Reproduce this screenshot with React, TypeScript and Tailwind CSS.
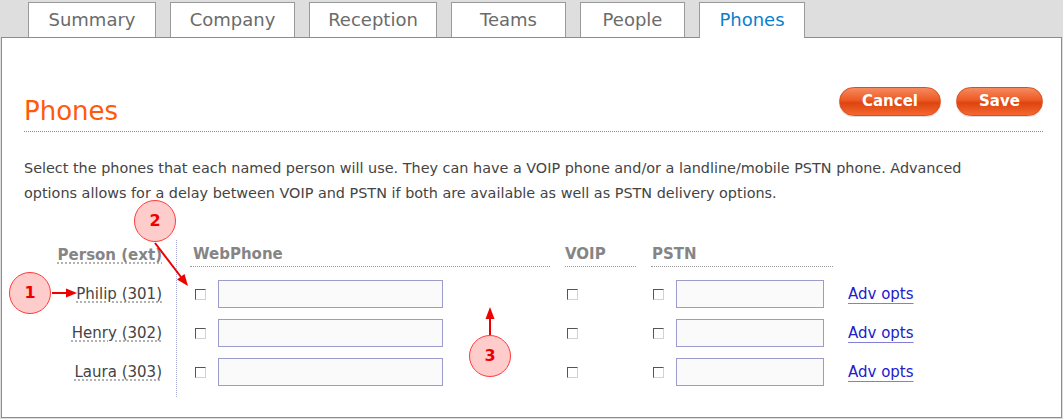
import React from "react";

const tabs = [
  { label: "Summary", w: "w-[128px]" },
  { label: "Company", w: "w-[125px]" },
  { label: "Reception", w: "w-[128px]" },
  { label: "Teams", w: "w-[115px]" },
  { label: "People", w: "w-[105px]" },
  { label: "Phones", w: "w-[106px]", active: true },
];

const people = ["Philip (301)", "Henry (302)", "Laura (303)"];

function Box() {
  return (
    <span className="inline-block h-[11px] w-[11px] shrink-0 border border-t-[#555] border-l-[#555] border-b-[#d6d3ce] border-r-[#d6d3ce] bg-white" />
  );
}

function Field({ w }: { w: string }) {
  return <div className={`h-[28px] ${w} border border-[#9b9bcc] bg-[#fafafa]`} />;
}

function OrangeButton({ label, w }: { label: string; w: string }) {
  return (
    <button
      className={`h-[29px] ${w} rounded-full border border-[#d9501e] bg-[linear-gradient(to_bottom,#f68a60,#ec5a24_45%,#dd4410_55%,#f5682f)] text-[15px] font-bold text-white shadow-[0_1px_1px_rgba(0,0,0,0.15)]`}
    >
      {label}
    </button>
  );
}

function Marker({ n, className }: { n: number; className: string }) {
  return (
    <div
      className={`absolute flex h-[42px] w-[42px] items-center justify-center rounded-full border border-[#ff3b3b] bg-[#ffcccc] text-[16px] font-bold text-[#ee0000] ${className}`}
    >
      {n}
    </div>
  );
}

export default function App() {
  return (
    <div
      className="relative h-[419px] w-[1063px] overflow-hidden bg-[#dedede] text-[#444]"
      style={{ fontFamily: '"DejaVu Sans", Verdana, sans-serif' }}
    >
      {/* tabs */}
      <div className="flex h-[37px] items-start gap-[14px] pl-[28px] pt-[2px]">
        {tabs.map((t) => (
          <div
            key={t.label}
            className={`relative flex ${t.w} items-center justify-center border border-b-0 border-[#999] bg-white pb-[1px] text-[18px] ${
              t.active ? "z-10 h-[36px] pb-[2px] text-[#0a7fcf]" : "h-[35px] text-[#6b6b6b]"
            }`}
          >
            {t.label}
          </div>
        ))}
      </div>

      {/* panel */}
      <div className="mx-[1px] border border-[#8c8c8c] bg-white pb-[20px]">
        <div className="ml-[22px] mr-[18px] mt-[49px] flex items-end justify-between border-b border-dotted border-[#ff6a1a] pb-[5px]">
          <h1 className="text-[26px] leading-[30px] text-[#ff5a0a]">Phones</h1>
          <div className="mb-[10px] flex gap-[15px]">
            <OrangeButton label="Cancel" w="w-[102px]" />
            <OrangeButton label="Save" w="w-[87px]" />
          </div>
        </div>

        <p className="ml-[22px] mr-[60px] mt-[24px] text-[14.4px] leading-[25px] text-[#444]">
          Select the phones that each named person will use. They can have a VOIP phone and/or a
          landline/mobile PSTN phone. Advanced options allows for a delay between VOIP and PSTN if
          both are available as well as PSTN delivery options.
        </p>

        {/* table */}
        <div className="ml-[22px] mt-[34px] flex items-start">
          <div className="w-[153px] border-r border-dotted border-[#a9a9d6] pb-[11px] pr-[14px] text-right">
            <div className="flex h-[27px] items-end justify-end pb-[3px]">
              <span className="text-[15px] font-bold leading-[18px] text-[#858585] underline decoration-dotted decoration-[#999] underline-offset-[3px]">
                Person (ext)
              </span>
            </div>
            {people.map((p, i) => (
              <div
                key={p}
                className={`flex h-[28px] items-center justify-end ${i === 0 ? "mt-[13px]" : "mt-[11px]"}`}
              >
                <span className="text-[15px] text-[#444] underline decoration-dotted decoration-[#999] underline-offset-[3px]">
                  {p}
                </span>
              </div>
            ))}
          </div>

          <div className="grid grid-cols-[360px_71px_182px_auto] content-start gap-x-[15px] pl-[13px]">
            <div className="flex h-[27px] items-end border-b border-dotted border-[#999] pb-[3px] pl-[3px] text-[15px] font-bold leading-[18px] text-[#858585]">
              WebPhone
            </div>
            <div className="flex h-[27px] items-end border-b border-dotted border-[#999] pb-[3px] text-[15px] font-bold leading-[18px] text-[#858585]">
              VOIP
            </div>
            <div className="flex h-[27px] items-end border-b border-dotted border-[#999] pb-[3px] pl-[1px] text-[15px] font-bold leading-[18px] text-[#858585]">
              PSTN
            </div>
            <div />

            {people.map((p, i) => (
              <React.Fragment key={p}>
                <div className={`flex h-[28px] items-center gap-[12px] pl-[5px] ${i === 0 ? "mt-[13px]" : "mt-[11px]"}`}>
                  <Box />
                  <Field w="w-[225px]" />
                </div>
                <div className={`flex h-[28px] items-center pl-[2px] ${i === 0 ? "mt-[13px]" : "mt-[11px]"}`}>
                  <Box />
                </div>
                <div className={`flex h-[28px] items-center gap-[12px] pl-[2px] ${i === 0 ? "mt-[13px]" : "mt-[11px]"}`}>
                  <Box />
                  <Field w="w-[148px]" />
                </div>
                <div className={`flex h-[28px] items-center ${i === 0 ? "mt-[13px]" : "mt-[11px]"}`}>
                  <a
                    href="#"
                    className="text-[15px] text-[#2020cc] underline decoration-[#8080d8] underline-offset-[4px]"
                  >
                    Adv opts
                  </a>
                </div>
              </React.Fragment>
            ))}
          </div>
        </div>
      </div>

      {/* annotations */}
      <Marker n={1} className="left-[9px] top-[272px]" />
      <Marker n={2} className="left-[134px] top-[200px]" />
      <Marker n={3} className="left-[469px] top-[335px]" />
      <svg className="pointer-events-none absolute inset-0" width="1063" height="419">
        <g stroke="#ee0000" strokeWidth="2" fill="#ee0000">
          <line x1="52" y1="293" x2="67" y2="293" />
          <polygon points="77,293 66,288.5 66,297.5" stroke="none" />
          <line x1="155" y1="243" x2="181" y2="277" />
          <polygon points="188,286 177,279.5 184.5,274" stroke="none" />
          <line x1="490" y1="335" x2="490" y2="318" />
          <polygon points="490,307 485.5,319 494.5,319" stroke="none" />
        </g>
      </svg>
    </div>
  );
}
